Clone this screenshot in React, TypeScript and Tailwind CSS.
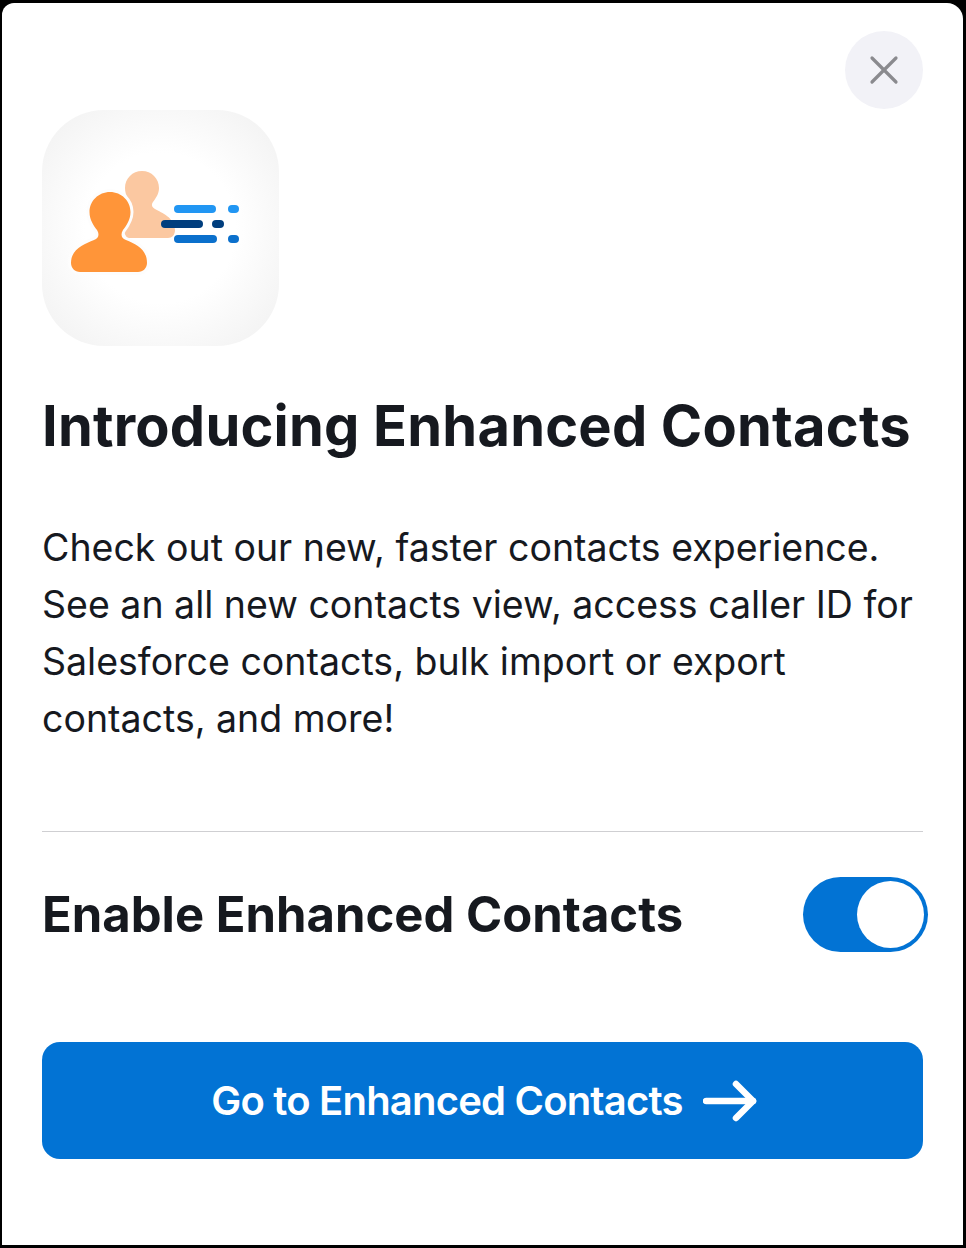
function ContactsIcon() {
  return (
    <div className="w-[237px] h-[236px] rounded-[62px] bg-[radial-gradient(circle_at_center,#ffffff_45%,#f0f0f0_100%)]">
      <svg width="236" height="236" viewBox="0 0 236 236" fill="none">
        <path
          d="M100 61C109.5 61 117 68.5 117 78C117 84 113.5 88.5 111 92C109 95 110 97 113 99C120 103 132 107 133 120C133 125 130 128 126 128L85 128L70 100C75 92 83 86 86 88C84 85 83 82 83 78C83 68.5 90.5 61 100 61Z"
          fill="#fbc8a1"
        />
        <path
          d="M68 82C79.5 82 88.5 91 88.5 102C88.5 110 84 116 81 120C78.5 124 79 128 84 130C94 134 105 139 105 153C105 158 101 162 96 162L38 162C33 162 29 158 29 153C29 139 42 134 52 130C57 128 57.5 124 55 120C52 116 47.5 110 47.5 102C47.5 91 56.5 82 68 82Z"
          fill="#ff9539"
          stroke="#fdfdfd"
          strokeWidth="6"
          paintOrder="stroke"
        />
        <rect x="132" y="95" width="42" height="8" rx="4" fill="#2196f3" />
        <rect x="186" y="95" width="11" height="8" rx="4" fill="#2196f3" />
        <rect x="119" y="110" width="42" height="8" rx="4" fill="#003e7e" />
        <rect x="170" y="110" width="12" height="8" rx="4" fill="#003e7e" />
        <rect x="132" y="125" width="43" height="8" rx="4" fill="#0b70cc" />
        <rect x="186" y="125" width="11" height="8" rx="4" fill="#0b70cc" />
      </svg>
    </div>
  );
}

export default function App() {
  return (
    <div className="w-[966px] h-[1248px] bg-black pt-[3px] pb-[3px] pl-[2px] pr-[3px] font-['Inter','Liberation_Sans',sans-serif]">
      <div className="h-full bg-white rounded-tl-[12px] rounded-tr-[16px] pt-[28px] pl-[40px] pr-[40px] text-[#16191f]">
        <div className="flex justify-end">
          <button className="w-[78px] h-[78px] rounded-full bg-[#f2f2f7] flex items-center justify-center">
            <svg width="30" height="30" viewBox="0 0 30 30" fill="none" stroke="#8a8a8e" strokeWidth="3.2" strokeLinecap="round">
              <path d="M3 3L27 27" />
              <path d="M27 3L3 27" />
            </svg>
          </button>
        </div>
        <div className="mt-px">
          <ContactsIcon />
        </div>
        <h1 className="mt-[45px] text-[56px] leading-[70px] font-bold tracking-[0.2px] whitespace-nowrap">
          Introducing Enhanced Contacts
        </h1>
        <p className="mt-[58px] text-[37.5px] leading-[57px] font-normal whitespace-nowrap">
          Check out our new, faster contacts experience.
          <br />
          See an all new contacts view, access caller ID for
          <br />
          Salesforce contacts, bulk import or export
          <br />
          contacts, and more!
        </p>
        <div className="mt-[84px] h-px bg-[#cfcfd2]" />
        <div className="mt-[45px] flex items-center justify-between">
          <span className="text-[49px] font-bold leading-[75px] whitespace-nowrap">Enable Enhanced Contacts</span>
          <div className="w-[125px] h-[75px] -mr-[5px] rounded-full bg-[#0273d4] flex items-center justify-end pr-[4px]">
            <div className="w-[67px] h-[67px] rounded-full bg-white" />
          </div>
        </div>
        <button className="mt-[90px] w-full h-[117px] rounded-[18px] bg-[#0273d4] flex items-center justify-center gap-[20px] pl-[3px] text-white">
          <span className="text-[40px] font-semibold tracking-[-0.8px] whitespace-nowrap">Go to Enhanced Contacts</span>
          <svg width="54" height="42" viewBox="0 0 54 42" fill="none" stroke="currentColor" strokeWidth="6.5" strokeLinecap="round" strokeLinejoin="round">
            <path d="M3 21H50" />
            <path d="M33 4L50 21L33 38" />
          </svg>
        </button>
      </div>
    </div>
  );
}
